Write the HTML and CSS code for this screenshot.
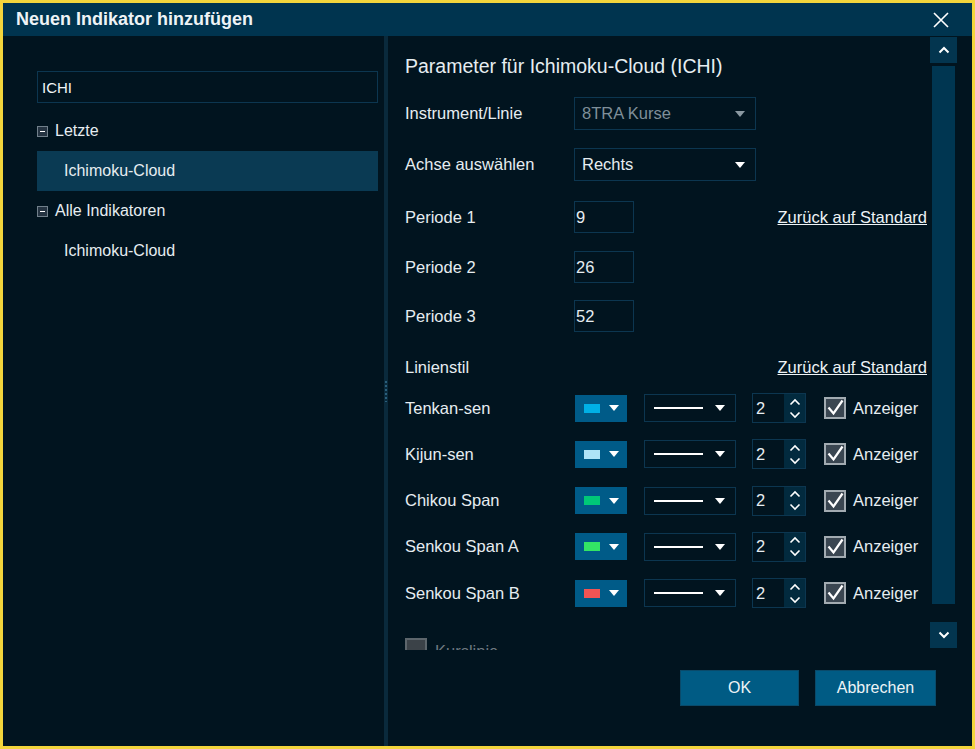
FILE: index.html
```html
<!DOCTYPE html>
<html lang="de">
<head>
    <meta charset="UTF-8">
    <title>Neuen Indikator hinzufügen</title>
    <link rel="stylesheet" href="styles.css">
</head>
<body>
<div class="window">
    <div class="titlebar">
        <span class="title">Neuen Indikator hinzufügen</span>
        <svg class="close" width="16" height="16" viewBox="0 0 16 16"><path d="M1 1 L15 15 M15 1 L1 15" stroke="#fff" stroke-width="1.6" fill="none"/></svg>
    </div>

    <div class="dialog-body">
        <!-- Suche und Baum -->
        <div class="left-panel">
            <input type="text" class="search" value="ICHI">
            <ul class="tree">
                <li class="group"><span class="toggle"></span>Letzte</li>
                <li class="leaf selected">Ichimoku-Cloud</li>
                <li class="group"><span class="toggle"></span>Alle Indikatoren</li>
                <li class="leaf">Ichimoku-Cloud</li>
            </ul>
        </div>

        <div class="splitter"><span class="grip"></span></div>

        <!-- Parameter -->
        <div class="right-panel">
            <div class="scroll-area">
                <div class="params">
                    <h2>Parameter für Ichimoku-Cloud (ICHI)</h2>

                    <div class="row row-select first">
                        <label>Instrument/Linie</label>
                        <div class="select disabled">8TRA Kurse<span class="caret"></span></div>
                    </div>
                    <div class="row row-select">
                        <label>Achse auswählen</label>
                        <div class="select">Rechts<span class="caret"></span></div>
                    </div>

                    <div class="row row-period p1">
                        <label>Periode 1</label>
                        <div class="num">9</div>
                        <a class="reset">Zurück auf Standard</a>
                    </div>
                    <div class="row row-period p2">
                        <label>Periode 2</label>
                        <div class="num">26</div>
                    </div>
                    <div class="row row-period">
                        <label>Periode 3</label>
                        <div class="num">52</div>
                    </div>

                    <div class="row row-head">
                        <label>Linienstil</label>
                        <a class="reset">Zurück auf Standard</a>
                    </div>

                    <div id="styleRows"></div>

                    <div class="row row-kurs">
                        <span class="checkbox off"></span>
                        <span class="kurs-label">Kurslinie</span>
                    </div>
                </div>

                <div class="vscroll">
                    <div class="sbtn"><svg width="12" height="8" viewBox="0 0 12 8"><path d="M1.5 6.5 L6 2 L10.5 6.5" stroke="#fff" stroke-width="2" fill="none"/></svg></div>
                    <div class="thumb"></div>
                    <div class="sbtn"><svg width="12" height="8" viewBox="0 0 12 8"><path d="M1.5 1.5 L6 6 L10.5 1.5" stroke="#fff" stroke-width="2" fill="none"/></svg></div>
                </div>
            </div>

            <div class="footer">
                <button class="btn">OK</button>
                <button class="btn">Abbrechen</button>
            </div>
        </div>
    </div>
</div>

<script>
    // Linien der Ichimoku-Cloud mit Farbe
    var lines = [
        { name: 'Tenkan-sen', color: '#00b0e6' },
        { name: 'Kijun-sen', color: '#aee3f7' },
        { name: 'Chikou Span', color: '#00c878' },
        { name: 'Senkou Span A', color: '#33e565' },
        { name: 'Senkou Span B', color: '#f25454' }
    ];

    var caret = '<span class="caret"></span>';
    var check = '<svg width="22" height="22" viewBox="0 0 22 22"><path d="M4.5 10.5 L9.5 16.5 L18.5 3.5" stroke="#fff" stroke-width="2.2" fill="none"/></svg>';
    var spin = '<span class="spin-btns">' +
        '<svg width="12" height="8" viewBox="0 0 12 8"><path d="M1.5 6.5 L6 2 L10.5 6.5" stroke="#fff" stroke-width="1.6" fill="none"/></svg>' +
        '<svg width="12" height="8" viewBox="0 0 12 8"><path d="M1.5 1.5 L6 6 L10.5 1.5" stroke="#fff" stroke-width="1.6" fill="none"/></svg>' +
        '</span>';

    var html = '';
    lines.forEach(function (l) {
        html += '<div class="row row-style">' +
            '<label>' + l.name + '</label>' +
            '<div class="color-btn"><span class="swatch" style="background:' + l.color + '"></span>' + caret + '</div>' +
            '<div class="line-select"><span class="line"></span>' + caret + '</div>' +
            '<div class="spin"><span class="spin-val">2</span>' + spin + '</div>' +
            '<span class="checkbox">' + check + '</span>' +
            '<span class="show">Anzeiger</span>' +
            '</div>';
    });
    document.getElementById('styleRows').innerHTML = html;
</script>
</body>
</html>
```

FILE: styles.css
```css
* {
    box-sizing: border-box;
}
body {
    margin: 0;
    font-family: "Liberation Sans", Arial, sans-serif;
    font-size: 16px;
    color: #e6edf1;
    background-color: #01141f;
}
.window {
    width: 975px;
    height: 749px;
    border: 3px solid #f3d53c;
    background-color: #01141f;
    display: flex;
    flex-direction: column;
}
.titlebar {
    height: 33px;
    background-color: #00344f;
    display: flex;
    align-items: center;
    padding-left: 13px;
    padding-right: 23px;
    flex-shrink: 0;
}
.title {
    font-size: 18px;
    font-weight: bold;
    color: #eef3f6;
}
.close {
    margin-left: auto;
}
.dialog-body {
    flex: 1;
    display: flex;
    min-height: 0;
}

/* linke Seite */
.left-panel {
    width: 381px;
    padding: 35px 6px 0 34px;
}
.search {
    width: 100%;
    height: 32px;
    background-color: #01141f;
    border: 1px solid #0c3650;
    color: #f1f5f7;
    font-family: inherit;
    font-size: 15px;
    padding: 0 4px;
    outline: none;
}
.tree {
    list-style: none;
    margin: 8px 0 0 0;
    padding: 0;
}
.tree li {
    height: 40px;
    display: flex;
    align-items: center;
}
.tree .leaf {
    padding-left: 27px;
}
.tree .selected {
    background-color: #0a3a53;
}
.toggle {
    width: 11px;
    height: 11px;
    border: 1px solid #71808b;
    background-color: #243341;
    margin-right: 7px;
    position: relative;
}
.toggle::after {
    content: "";
    position: absolute;
    left: 2px;
    right: 2px;
    top: 4px;
    height: 1px;
    background-color: #fff;
}
.splitter {
    width: 4px;
    background-color: #0a2a3c;
    position: relative;
}
.grip {
    position: absolute;
    left: 1px;
    top: 344px;
    width: 2px;
    height: 22px;
    background-image: radial-gradient(#2a5f7c 45%, transparent 50%);
    background-size: 2px 4px;
}

/* rechte Seite */
.right-panel {
    flex: 1;
    display: flex;
    flex-direction: column;
}
.scroll-area {
    height: 614px;
    display: flex;
    padding-right: 15px;
}
.params {
    flex: 1;
    overflow: hidden;
    padding: 16px 3px 0 17px;
    font-size: 16.5px;
}
.params h2 {
    margin: 0;
    font-size: 19.5px;
    font-weight: normal;
    height: 29px;
    line-height: 29px;
}
.row {
    display: flex;
    align-items: center;
}
.row label {
    width: 169px;
    flex-shrink: 0;
}
.row-select {
    height: 33px;
    margin-top: 18px;
}
.row-select.first {
    margin-top: 16px;
}
.select {
    width: 182px;
    height: 33px;
    border: 1px solid #0c3650;
    display: flex;
    align-items: center;
    padding: 0 10px 0 7px;
}
.select.disabled {
    color: #7f8f99;
}
.select .caret {
    margin-left: auto;
}
.caret {
    width: 0;
    height: 0;
    border-left: 5.5px solid transparent;
    border-right: 5.5px solid transparent;
    border-top: 6px solid #fff;
}
.disabled .caret {
    border-top-color: #8a98a1;
}
.row-period {
    height: 32px;
    margin-top: 17px;
}
.row-period.p1 {
    margin-top: 20px;
}
.row-period.p2 {
    margin-top: 18px;
}
.num {
    width: 60px;
    height: 32px;
    border: 1px solid #0c3650;
    display: flex;
    align-items: center;
    padding-left: 1px;
}
.reset {
    margin-left: auto;
    text-decoration: underline;
    color: #eef3f6;
    cursor: pointer;
}
.row-head {
    height: 24px;
    margin-top: 23px;
}
.row-style {
    height: 30px;
    margin-top: 16.3px;
}
#styleRows .row-style:first-child {
    margin-top: 14px;
}
.color-btn {
    width: 52px;
    height: 27px;
    margin-left: 1px;
    background-color: #005b88;
    display: flex;
    align-items: center;
    padding-left: 9px;
}
.swatch {
    width: 16px;
    height: 9px;
    margin-right: 9px;
}
.line-select {
    width: 92px;
    height: 28px;
    margin-left: 17px;
    border: 1px solid #0c3650;
    display: flex;
    align-items: center;
    padding: 0 10px 0 9px;
}
.line {
    width: 49px;
    height: 2px;
    background-color: #fff;
}
.line-select .caret {
    margin-left: auto;
}
.spin {
    width: 54px;
    height: 30px;
    margin-left: 16px;
    border: 1px solid #0c3650;
    display: flex;
}
.spin-val {
    flex: 1;
    display: flex;
    align-items: center;
    padding-left: 3px;
}
.spin-btns {
    width: 21px;
    background-color: #022a3e;
    display: flex;
    flex-direction: column;
    justify-content: center;
    align-items: center;
    gap: 5px;
}
.checkbox {
    width: 22px;
    height: 22px;
    margin-left: 18px;
    border: 2px solid #a2abb1;
    background-color: #3a4651;
    display: flex;
    align-items: center;
    justify-content: center;
}
.checkbox svg {
    flex-shrink: 0;
}
.show {
    margin-left: 7px;
}
.row-kurs {
    height: 24px;
    margin-top: 30px;
    align-items: flex-start;
}
.checkbox.off {
    margin-left: 0;
    border-color: #5d666c;
    background-color: #3b4248;
}
.kurs-label {
    margin-left: 8px;
    margin-top: 4px;
    color: #6f7a81;
}
.vscroll {
    width: 27px;
    display: flex;
    flex-direction: column;
    align-items: center;
    padding-top: 1px;
}
.sbtn {
    width: 27px;
    height: 26px;
    background-color: #03354f;
    display: flex;
    align-items: center;
    justify-content: center;
}
.thumb {
    width: 23px;
    height: 538px;
    margin: 3px 0 18px;
    background-color: #003651;
}

/* Knöpfe unten */
.footer {
    flex: 1;
    display: flex;
    justify-content: flex-end;
    align-items: flex-start;
    gap: 16px;
    padding: 20px 36px 0 0;
}
.btn {
    width: 119px;
    height: 36px;
    background-color: #005b84;
    border: 1px solid #0a4a6a;
    color: #eef3f6;
    font-family: inherit;
    font-size: 16px;
    cursor: pointer;
}
.btn + .btn {
    width: 121px;
}
```
